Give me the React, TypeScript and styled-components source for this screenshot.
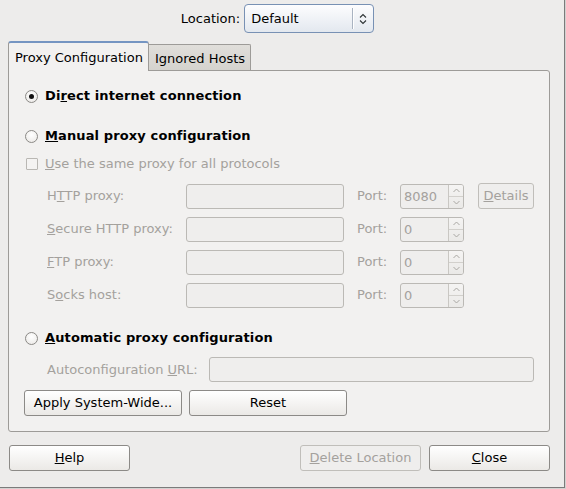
import React from 'react';
import styled, { createGlobalStyle, css } from 'styled-components';

const GlobalStyle = createGlobalStyle`
  html, body {
    margin: 0;
    padding: 0;
  }
  body {
    background: #d3d2d0;
    font-family: "DejaVu Sans", "Liberation Sans", sans-serif;
    font-size: 13px;
    color: #000;
  }
`;

const disabledText = '#a4a19d';

const Window = styled.div`
  box-sizing: border-box;
  width: 565px;
  height: 488px;
  padding-top: 4px;
  display: flex;
  flex-direction: column;
  background: #edeceb;
  border-right: 1px solid #7b7b7b;
  border-bottom: 1px solid #7b7b7b;
`;

const LocationRow = styled.div`
  display: flex;
  align-items: center;
  justify-content: center;
  gap: 4px;
  padding-right: 9px;
  line-height: 18px;
`;

const Combo = styled.div`
  box-sizing: border-box;
  width: 130px;
  height: 29px;
  display: flex;
  align-items: center;
  padding-left: 6px;
  border: 1px solid #7891b4;
  border-radius: 4px;
  background: linear-gradient(#fdfdfe, #e3e8ef);
`;

const ComboText = styled.span`
  flex: 1;
`;

const ComboArrow = styled.span`
  width: 20px;
  height: 21px;
  display: flex;
  align-items: center;
  justify-content: center;
  border-left: 1px solid #a9b3c1;
  box-shadow: inset 1px 0 0 #ffffff;
`;

const Notebook = styled.div`
  margin: 8px 0 0 8px;
  width: 542px;
  display: flex;
  flex-direction: column;
`;

const TabRow = styled.div`
  display: flex;
  align-items: flex-end;
  height: 30px;
  margin-bottom: -1px;
  position: relative;
  z-index: 1;
`;

const Tab = styled.div<{ $active?: boolean }>`
  box-sizing: border-box;
  display: flex;
  align-items: center;
  padding-top: 2px;
  line-height: 18px;
  border: 1px solid #9d9b98;
  border-bottom: none;
  ${({ $active }) =>
    $active
      ? css`
          width: 141px;
          height: 30px;
          padding-left: 6px;
          background: #f2f1f0;
          border-top: 2px solid #7595c2;
          border-radius: 3px 3px 0 0;
        `
      : css`
          width: 102px;
          height: 26px;
          margin-bottom: 1px;
          padding-left: 6px;
          border-left: none;
          background: linear-gradient(#e0deda, #d5d3ce);
          border-radius: 0 2px 0 0;
        `}
`;

const Panel = styled.div`
  display: flex;
  flex-direction: column;
  padding: 16px 15px 15px 16px;
  background: #f2f1f0;
  border: 1px solid #9d9b98;
  border-radius: 0 3px 3px 3px;
`;

const OptionRow = styled.label<{ $gap: number; $disabled?: boolean }>`
  display: flex;
  align-items: center;
  gap: 7px;
  height: 18px;
  line-height: 18px;
  margin-top: ${({ $gap }) => $gap}px;
  color: ${({ $disabled }) => ($disabled ? disabledText : '#000')};
`;

const Heading = styled.span`
  font-weight: bold;
  letter-spacing: 0.12px;
`;

const Key = styled.span`
  text-decoration: underline;
`;

const Radio = styled.span<{ $checked?: boolean }>`
  box-sizing: border-box;
  width: 13px;
  height: 13px;
  border-radius: 50%;
  border: 1px solid #8b8986;
  background: radial-gradient(circle at 50% 35%, #ffffff, #e9e7e4);
  display: flex;
  align-items: center;
  justify-content: center;

  &::after {
    content: '';
    display: ${({ $checked }) => ($checked ? 'block' : 'none')};
    width: 5px;
    height: 5px;
    border-radius: 50%;
    background: #111;
  }
`;

const Check = styled.span`
  box-sizing: border-box;
  width: 12px;
  height: 12px;
  margin-left: 1px;
  border: 1px solid #b9b7b3;
  border-radius: 1px;
  background: #f4f3f2;
`;

const ProxyGrid = styled.div`
  display: grid;
  grid-template-columns: 139px 158px 56px 64px 70px;
  grid-auto-rows: 26px;
  row-gap: 7px;
  align-items: center;
  margin: 10px 0 0 22px;
  color: ${disabledText};
`;

const FieldLabel = styled.span`
  line-height: 18px;
`;

const PortLabel = styled.span`
  padding-left: 13px;
  line-height: 18px;
`;

const Entry = styled.div<{ $grow?: boolean }>`
  box-sizing: border-box;
  height: 25px;
  border: 1px solid #bbb9b5;
  border-radius: 3px;
  background: #efeeed;
  ${({ $grow }) => $grow && 'flex: 1;'}
`;

const Spin = styled.div`
  box-sizing: border-box;
  width: 64px;
  height: 25px;
  display: flex;
  border: 1px solid #bbb9b5;
  border-radius: 3px;
  background: #efeeed;
  overflow: hidden;
`;

const SpinValue = styled.span`
  flex: 1;
  padding-left: 3px;
  line-height: 23px;
`;

const SpinButtons = styled.span`
  width: 14px;
  display: flex;
  flex-direction: column;
  border-left: 1px solid #c9c7c3;
  background: linear-gradient(#f5f4f3, #eae9e7);
`;

const SpinHalf = styled.span<{ $top?: boolean }>`
  flex: 1;
  display: flex;
  align-items: center;
  justify-content: center;
  ${({ $top }) => $top && 'border-bottom: 1px solid #d2d0cc;'}
`;

const Button = styled.button<{ $w: number; $disabled?: boolean }>`
  box-sizing: border-box;
  width: ${({ $w }) => $w}px;
  height: 26px;
  padding: 0;
  font-family: inherit;
  font-size: 13px;
  line-height: 18px;
  color: ${({ $disabled }) => ($disabled ? disabledText : '#000')};
  border: 1px solid ${({ $disabled }) => ($disabled ? '#c0beba' : '#8c8a87')};
  border-radius: 3px;
  background: ${({ $disabled }) =>
    $disabled ? '#efeeed' : 'linear-gradient(#ffffff, #ebe9e6)'};
`;

const DetailsButton = styled(Button)`
  margin-left: 14px;
  justify-self: start;
`;

const AutoRow = styled.div`
  display: flex;
  align-items: center;
  height: 25px;
  margin: 10px 0 0 22px;
  color: ${disabledText};
`;

const AutoLabel = styled.span`
  width: 162px;
  line-height: 18px;
`;

const ActionRow = styled.div`
  display: flex;
  gap: 7px;
  margin: 8px 0 0 -1px;
`;

const BottomRow = styled.div`
  display: flex;
  gap: 8px;
  margin-top: 13px;
  padding: 0 14px 0 9px;
`;

const Spacer = styled.div`
  flex: 1;
`;

const UpDown = () => (
  <svg width="8" height="12" viewBox="0 0 8 12">
    <path d="M1 4.5 L4 1.5 L7 4.5" fill="none" stroke="#2e3436" strokeWidth="1.1" />
    <path d="M1 7.5 L4 10.5 L7 7.5" fill="none" stroke="#2e3436" strokeWidth="1.1" />
  </svg>
);

const Chevron = ({ up }: { up?: boolean }) => (
  <svg width="7" height="5" viewBox="0 0 7 5">
    <path
      d={up ? 'M0.5 4 L3.5 1 L6.5 4' : 'M0.5 1 L3.5 4 L6.5 1'}
      fill="none"
      stroke="#a9a7a3"
      strokeWidth="1"
    />
  </svg>
);

const PortSpin = ({ value }: { value: string }) => (
  <Spin>
    <SpinValue>{value}</SpinValue>
    <SpinButtons>
      <SpinHalf $top>
        <Chevron up />
      </SpinHalf>
      <SpinHalf>
        <Chevron />
      </SpinHalf>
    </SpinButtons>
  </Spin>
);

const proxies = [
  { label: <>H<Key>T</Key>TP proxy:</>, port: '8080', details: true },
  { label: <><Key>S</Key>ecure HTTP proxy:</>, port: '0' },
  { label: <><Key>F</Key>TP proxy:</>, port: '0' },
  { label: <>S<Key>o</Key>cks host:</>, port: '0' },
];

export default function App() {
  return (
    <>
      <GlobalStyle />
      <Window>
        <LocationRow>
          <span>Location:</span>
          <Combo>
            <ComboText>Default</ComboText>
            <ComboArrow>
              <UpDown />
            </ComboArrow>
          </Combo>
        </LocationRow>

        <Notebook>
          <TabRow>
            <Tab $active>Proxy Configuration</Tab>
            <Tab>Ignored Hosts</Tab>
          </TabRow>
          <Panel>
            <OptionRow $gap={0}>
              <Radio $checked />
              <Heading>
                Di<Key>r</Key>ect internet connection
              </Heading>
            </OptionRow>
            <OptionRow $gap={22}>
              <Radio />
              <Heading>
                <Key>M</Key>anual proxy configuration
              </Heading>
            </OptionRow>
            <OptionRow $gap={10} $disabled>
              <Check />
              <span>
                <Key>U</Key>se the same proxy for all protocols
              </span>
            </OptionRow>

            <ProxyGrid>
              {proxies.map((p, i) => (
                <React.Fragment key={i}>
                  <FieldLabel>{p.label}</FieldLabel>
                  <Entry />
                  <PortLabel>Port:</PortLabel>
                  <PortSpin value={p.port} />
                  {p.details ? (
                    <DetailsButton $w={56} $disabled>
                      <Key>D</Key>etails
                    </DetailsButton>
                  ) : (
                    <span />
                  )}
                </React.Fragment>
              ))}
            </ProxyGrid>

            <OptionRow $gap={21}>
              <Radio />
              <Heading>
                <Key>A</Key>utomatic proxy configuration
              </Heading>
            </OptionRow>
            <AutoRow>
              <AutoLabel>
                Autoconfiguration <Key>U</Key>RL:
              </AutoLabel>
              <Entry $grow />
            </AutoRow>

            <ActionRow>
              <Button $w={158}>Apply System-Wide...</Button>
              <Button $w={158}>Reset</Button>
            </ActionRow>
          </Panel>
        </Notebook>

        <BottomRow>
          <Button $w={121}>
            <Key>H</Key>elp
          </Button>
          <Spacer />
          <Button $w={121} $disabled>
            <Key>D</Key>elete Location
          </Button>
          <Button $w={121}>
            <Key>C</Key>lose
          </Button>
        </BottomRow>
      </Window>
    </>
  );
}
